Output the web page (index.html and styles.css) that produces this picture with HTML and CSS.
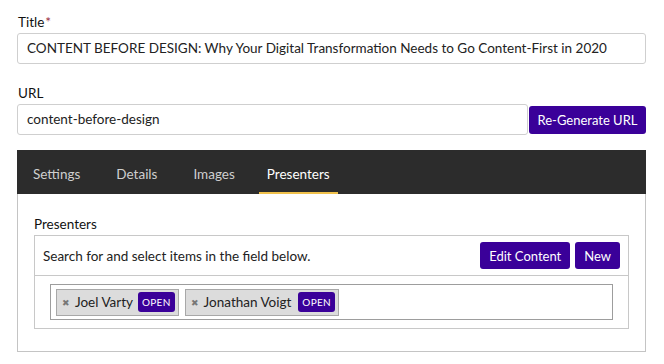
FILE: index.html
```html
<!DOCTYPE html>
<html>
<head>
<meta charset="utf-8">
<link rel="stylesheet" href="styles.css">
</head>
<body>
<div class="page">
  <div class="field">
    <label class="label">Title<span class="req">*</span></label>
    <div class="input">CONTENT BEFORE DESIGN: Why Your Digital Transformation Needs to Go Content-First in 2020</div>
  </div>
  <div class="field url-field">
    <label class="label">URL</label>
    <div class="url-row">
      <div class="input url-input">content-before-design</div>
      <button class="btn regen">Re-Generate URL</button>
    </div>
  </div>
  <div class="panel">
    <div class="tabs">
      <div class="tab">Settings</div>
      <div class="tab">Details</div>
      <div class="tab">Images</div>
      <div class="tab active">Presenters</div>
    </div>
    <div class="panel-body">
      <div class="sub-label">Presenters</div>
      <div class="linked">
        <div class="linked-head">
          <span class="hint">Search for and select items in the field below.</span>
          <div class="actions">
            <button class="btn small">Edit Content</button>
            <button class="btn small">New</button>
          </div>
        </div>
        <div class="linked-body">
          <div class="tagfield">
            <span class="tag"><span class="x">&#x2716;</span>Joel Varty<span class="open">OPEN</span></span>
            <span class="tag"><span class="x">&#x2716;</span>Jonathan Voigt<span class="open">OPEN</span></span>
          </div>
        </div>
      </div>
    </div>
  </div>
</div>
</body>
</html>
```

FILE: styles.css
```css
* { box-sizing: border-box; }
body {
  margin: 0;
  background: #fff;
  font-family: Lato, "Noto Sans", sans-serif;
  color: #222;
}
.page {
  padding: 13px 18px 0 17px;
  width: 664px;
}
.field { display: flex; flex-direction: column; }
.label {
  font-size: 13.5px;
  line-height: 18px;
  color: #111;
  margin-left: 1px;
  margin-bottom: 2px;
}
.req { color: #9b2c3c; margin-left: 1px; }
.input {
  height: 31px;
  border: 1px solid #cfcfcf;
  border-radius: 3px;
  font-size: 13.5px;
  line-height: 29px;
  padding: 0 9px;
  color: #222;
  white-space: nowrap;
  overflow: hidden;
}
.url-field { margin-top: 20px; }
.url-row { display: flex; align-items: flex-end; }
.url-input { flex: 1; }
.btn {
  background: #3a0099;
  color: #fff;
  border: 0;
  font-family: inherit;
  font-size: 13px;
  border-radius: 3px;
  cursor: pointer;
}
.regen {
  width: 117px;
  height: 28px;
  margin-left: 1px;
  margin-bottom: 1px;
}
.panel {
  margin-top: 15px;
  width: 629px;
  height: 202px;
  border: 1px solid #c4c4c4;
}
.tabs {
  height: 44px;
  background: #2c2c2c;
  display: flex;
  padding-left: 8px;
  margin: -1px -1px 0 -1px;
}
.tab {
  font-size: 13.5px;
  color: #cfcfcf;
  padding: 0 8px;
  margin-right: 20px;
  line-height: 49px;
  border-bottom: 2px solid transparent;
  height: 44px;
}
.tab:nth-child(3) { margin-right: 16px; }
.tab.active {
  color: #fff;
  border-bottom-color: #f0c14b;
  margin-right: 0;
}
.panel-body { padding: 21px 16px 0 16px; }
.sub-label {
  font-size: 13.5px;
  line-height: 18px;
  color: #111;
  margin-bottom: 2px;
}
.linked {
  border: 1px solid #c8c8c8;
  height: 94px;
}
.linked-head {
  height: 40px;
  display: flex;
  align-items: center;
  justify-content: space-between;
  padding: 0 8px 0 8px;
  border-bottom: 1px solid #c8c8c8;
}
.hint { font-size: 13.5px; color: #222; }
.actions { display: flex; gap: 5px; }
.small {
  height: 27px;
  padding: 0 9px;
  font-size: 13px;
  margin-top: 0;
}
.linked-body { padding: 8px 15px 0 15px; }
.tagfield {
  height: 36px;
  border: 1px solid #9d9d9d;
  display: flex;
  align-items: center;
  padding-left: 5px;
  gap: 6px;
}
.tag {
  display: inline-flex;
  align-items: center;
  height: 27px;
  background: #dcdcdc;
  border: 1px solid #a8a8a8;
  padding: 0 3px 0 5px;
  font-size: 13.5px;
  color: #222;
}
.tag + .tag .open { margin-left: 7px; }
.x {
  font-size: 9px;
  color: #777;
  margin-right: 5px;
}
.open {
  background: #3a0099;
  color: #fff;
  font-size: 10px;
  border-radius: 3px;
  height: 20px;
  line-height: 20px;
  padding: 0 4px;
  margin-left: 5px;
  letter-spacing: 0.3px;
}
```
